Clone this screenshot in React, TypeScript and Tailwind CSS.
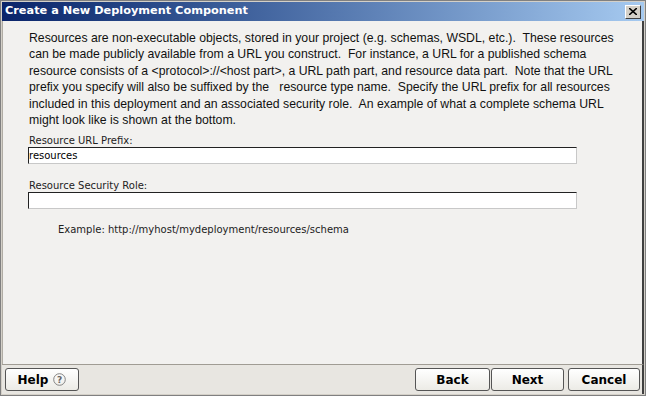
import React from "react";

const lines = [
  "Resources are non-executable objects, stored in your project (e.g. schemas, WSDL, etc.).  These resources",
  "can be made publicly available from a URL you construct.  For instance, a URL for a published schema",
  "resource consists of a <protocol>://<host part>, a URL path part, and resource data part.  Note that the URL",
  "prefix you specify will also be suffixed by the   resource type name.  Specify the URL prefix for all resources",
  "included in this deployment and an associated security role.  An example of what a complete schema URL",
  "might look like is shown at the bottom.",
];

function DlgButton({ label, width, children }: { label: string; width: string; children?: React.ReactNode }) {
  return (
    <button
      className={`${width} h-[23px] flex items-center justify-center gap-[5px] rounded-[3px] border border-[#555] bg-gradient-to-b from-[#ffffff] to-[#ecebe6] text-[12px] font-bold text-black`}
      style={{ fontFamily: '"DejaVu Sans", sans-serif' }}
    >
      {label}
      {children}
    </button>
  );
}

export default function App() {
  return (
    <div className="w-[646px] h-[396px] bg-[#d4d0c8] border border-[#808080] flex flex-col overflow-hidden">
      {/* title bar */}
      <div className="mx-[1px] mt-[1px] h-[19px] flex items-center justify-between pl-[3px] pr-[3px] bg-gradient-to-r from-[#0a246a] to-[#a6caf0]">
        <span
          className="text-[11.3px] font-bold text-white"
          style={{ fontFamily: '"DejaVu Sans", sans-serif' }}
        >
          Create a New Deployment Component
        </span>
        <div className="w-[16px] h-[14px] bg-[#d4d0c8] border border-t-white border-l-white border-r-[#404040] border-b-[#404040] flex items-center justify-center">
          <svg width="8" height="7" viewBox="0 0 8 7">
            <path d="M0 0 L8 7 M8 0 L0 7" stroke="#000" strokeWidth="1.6" />
          </svg>
        </div>
      </div>

      {/* content */}
      <div className="flex-1 mx-[1px] bg-[#f2f1ef] border-r-[2px] border-r-[#404040] border-l border-l-[#b0aca4] flex flex-col pl-[26px] pt-[9px]">
        <div
          className="whitespace-pre text-[12.25px] leading-[16.4px] text-[#111]"
          style={{ fontFamily: '"Liberation Sans", Arial, sans-serif' }}
        >
          {lines.map((l) => (
            <div key={l}>{l}</div>
          ))}
        </div>

        <div className="mt-[6px] flex flex-col" style={{ fontFamily: '"DejaVu Sans", sans-serif' }}>
          <span className="text-[10px] leading-[13px] text-[#222]">Resource URL Prefix:</span>
          <div className="mt-[0px] -ml-[1px] w-[549px] h-[17px] bg-white border border-t-[#222] border-l-[#222] border-r-[#c8c8c8] border-b-[#c8c8c8] flex items-center text-[10px] text-black">
            resources
          </div>
          <span className="mt-[15px] text-[10px] leading-[13px] text-[#222]">Resource Security Role:</span>
          <div className="mt-[0px] -ml-[1px] w-[549px] h-[17px] bg-white border border-t-[#222] border-l-[#222] border-r-[#c8c8c8] border-b-[#c8c8c8]" />
          <span className="mt-[14px] ml-[29px] text-[10px] leading-[13px] text-[#222]">
            Example: http://myhost/mydeployment/resources/schema
          </span>
        </div>
      </div>

      {/* button bar */}
      <div className="h-[30px] mx-[1px] mb-[1px] bg-[#e8e6e1] border-t border-t-[#a09c94] border-r-[2px] border-r-[#404040] flex items-center pl-[3px] pr-[2px]">
        <DlgButton label="Help" width="w-[74px]">
          <svg width="13" height="13" viewBox="0 0 13 13">
            <circle cx="6.5" cy="6.5" r="5.8" fill="none" stroke="#777" strokeWidth="0.9" />
            <text x="6.5" y="10" textAnchor="middle" fontSize="9" fill="#666" fontFamily="DejaVu Sans">?</text>
          </svg>
        </DlgButton>
        <div className="flex-1" />
        <div className="flex">
          <DlgButton label="Back" width="w-[75px]" />
          <div className="w-[1px]" />
          <DlgButton label="Next" width="w-[73px]" />
          <div className="w-[4px]" />
          <DlgButton label="Cancel" width="w-[72px]" />
        </div>
      </div>
    </div>
  );
}
